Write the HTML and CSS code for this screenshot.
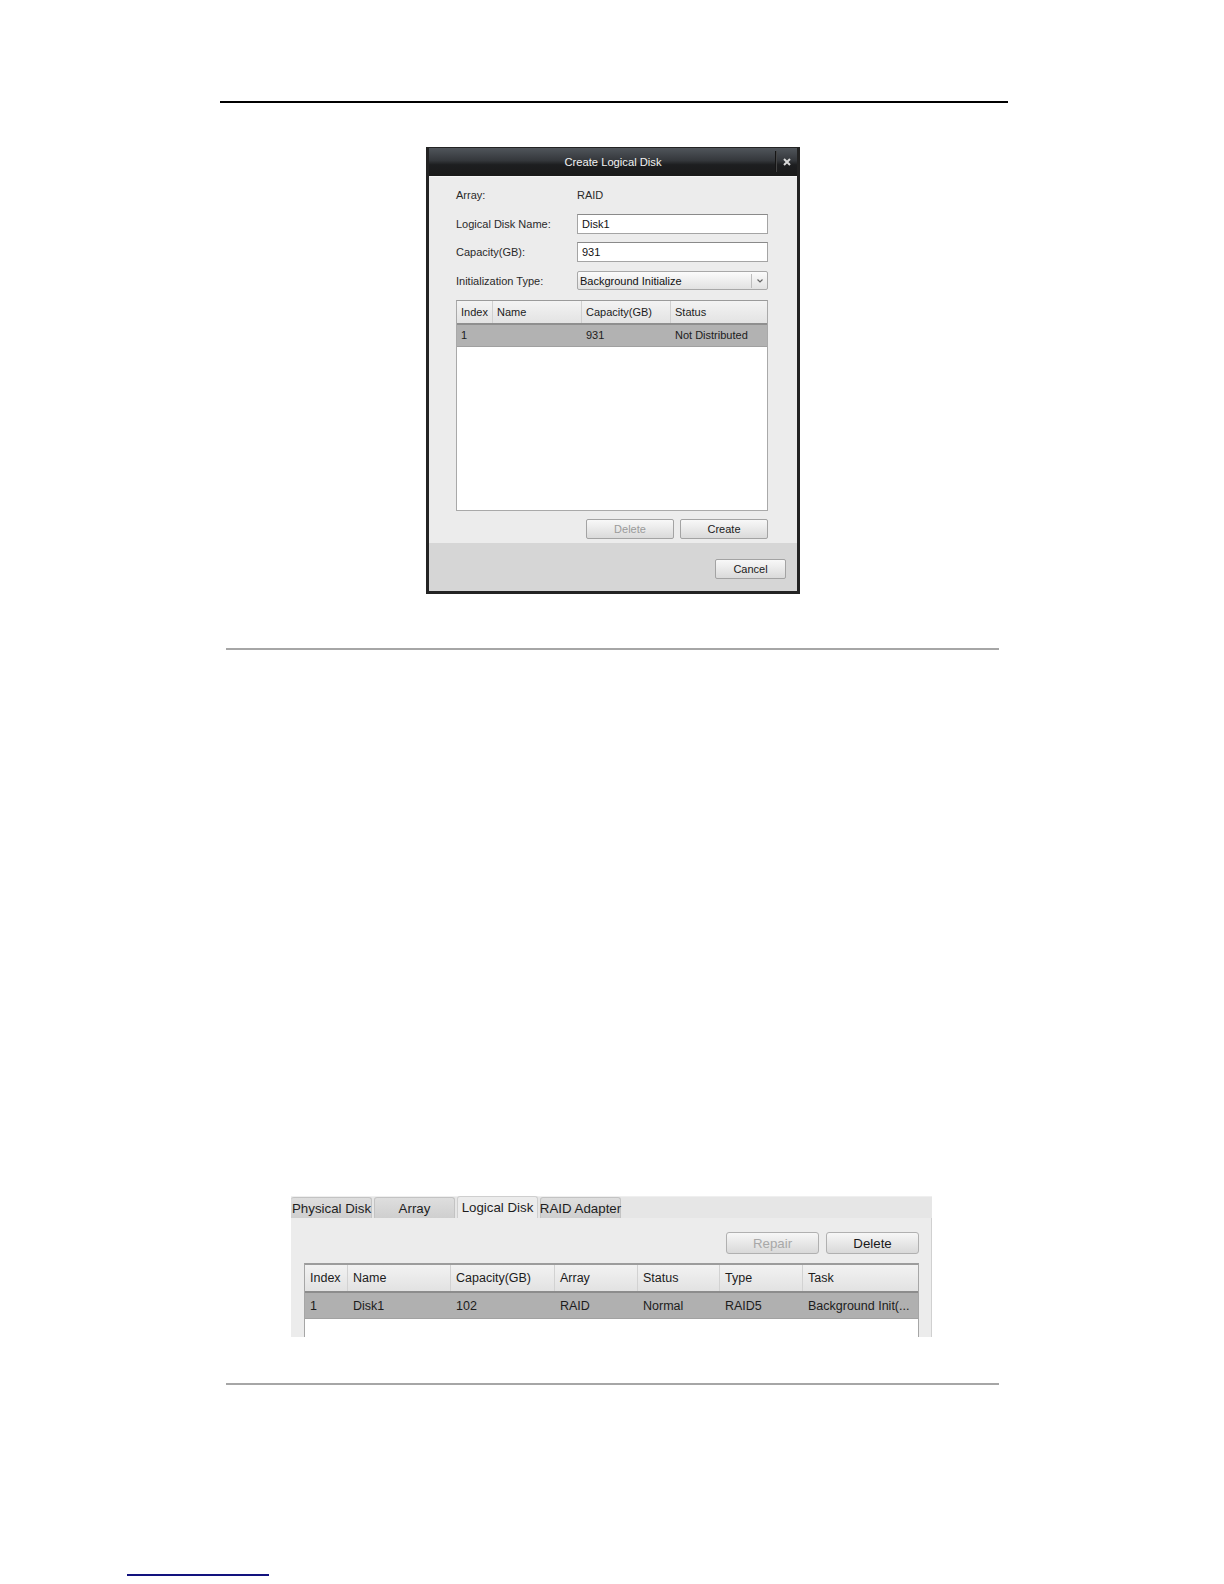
FILE: index.html
```html
<!DOCTYPE html>
<html>
<head>
<meta charset="utf-8">
<title>Create Logical Disk</title>
<link rel="stylesheet" href="styles.css">
</head>
<body>
<div class="page">
  <div class="rule-top"></div>

  <div class="dialog">
    <div class="titlebar">
      <span class="title">Create Logical Disk</span>
      <span class="close"><svg width="8" height="8" viewBox="0 0 8 8"><path d="M1 1 L7 7 M7 1 L1 7" stroke="#d8d8d8" stroke-width="2" fill="none"/></svg></span>
    </div>
    <div class="dlg-body">
      <div class="form">
        <div class="lbl">Array:</div><div class="val">RAID</div>
        <div class="lbl">Logical Disk Name:</div><div class="input">Disk1</div>
        <div class="lbl">Capacity(GB):</div><div class="input">931</div>
        <div class="lbl">Initialization Type:</div>
        <div class="select"><span class="sel-text">Background Initialize</span><span class="sel-arrow"><svg width="8" height="6" viewBox="0 0 8 6"><polyline points="1.5,1.5 4,4 6.5,1.5" fill="none" stroke="#666" stroke-width="1.2"/></svg></span></div>
      </div>
      <div class="dtable">
        <div class="dthead">
          <div class="dc w1">Index</div><div class="dc w2">Name</div><div class="dc w3">Capacity(GB)</div><div class="dc w4">Status</div>
        </div>
        <div class="dtrow">
          <div class="dc w1">1</div><div class="dc w2"></div><div class="dc w3">931</div><div class="dc w4">Not Distributed</div>
        </div>
      </div>
      <div class="dbtns">
        <div class="btn dis">Delete</div>
        <div class="btn">Create</div>
      </div>
    </div>
    <div class="dlg-foot">
      <div class="btn cancel">Cancel</div>
    </div>
  </div>

  <div class="rule-gray r1"></div>

  <div class="panel">
    <div class="tabs">
      <div class="tab">Physical Disk</div>
      <div class="tab">Array</div>
      <div class="tab active">Logical Disk</div>
      <div class="tab">RAID Adapter</div>
    </div>
    <div class="pcontent">
      <div class="pbtns">
        <div class="pbtn dis">Repair</div>
        <div class="pbtn">Delete</div>
      </div>
      <div class="ptable">
        <div class="pthead">
          <div class="pc p1">Index</div><div class="pc p2">Name</div><div class="pc p3">Capacity(GB)</div><div class="pc p4">Array</div><div class="pc p5">Status</div><div class="pc p6">Type</div><div class="pc p7">Task</div>
        </div>
        <div class="ptrow">
          <div class="pc p1">1</div><div class="pc p2">Disk1</div><div class="pc p3">102</div><div class="pc p4">RAID</div><div class="pc p5">Normal</div><div class="pc p6">RAID5</div><div class="pc p7">Background Init(...</div>
        </div>
      </div>
    </div>
  </div>

  <div class="rule-gray r2"></div>

  <div class="link-line"></div>
</div>
</body>
</html>
```

FILE: styles.css
```css
html, body {
  margin: 0;
  padding: 0;
  background: #ffffff;
}
body {
  font-family: "Liberation Sans", Arial, sans-serif;
  color: #222;
}
.page {
  width: 1224px;
  height: 1584px;
  overflow: hidden;
  display: flow-root;
}
.rule-top {
  margin: 101px 0 0 220px;
  width: 788px;
  height: 2px;
  background: #000;
}

/* ---------- dialog ---------- */
.dialog {
  margin: 44px 0 0 426px;
  width: 374px;
  height: 447px;
  box-sizing: border-box;
  border: 3px solid #232323;
  border-top-width: 1px;
  background: #ececec;
  display: flex;
  flex-direction: column;
}
.titlebar {
  height: 28px;
  flex: none;
  background: linear-gradient(#50555b, #34373b 45%, #1d1e20 60%, #1a1a1a);
  display: flex;
  align-items: center;
  justify-content: center;
  position: relative;
}
.title {
  color: #f2f2f2;
  font-size: 11.2px;
}
.close {
  position: absolute;
  right: 0;
  top: 3px;
  width: 21px;
  height: 21px;
  border-left: 1px solid #151515;
  box-shadow: inset 1px 0 0 #444;
  display: flex;
  align-items: center;
  justify-content: center;
}
.dlg-body {
  height: 367px;
  flex: none;
  box-sizing: border-box;
  padding: 8px 29px 0 27px;
  background: #ececec;
  border-top: 1px solid #f6f6f6;
  font-size: 11px;
  color: #2a2a2a;
}
.form {
  display: grid;
  grid-template-columns: 121px 1fr;
  grid-auto-rows: 20px;
  row-gap: 8.5px;
  align-items: center;
}
.lbl, .val {
  line-height: 20px;
}
.input {
  height: 20px;
  box-sizing: border-box;
  background: #fff;
  border: 1px solid #a4a4a4;
  border-top-color: #8a8a8a;
  padding-left: 4px;
  line-height: 18px;
  color: #111;
}
.select {
  height: 19px;
  box-sizing: border-box;
  border: 1px solid #a8a8a8;
  border-radius: 2px;
  background: linear-gradient(#fbfbfb, #e2e2e2);
  display: flex;
  align-items: center;
  color: #111;
}
.sel-text {
  flex: 1;
  padding-left: 2px;
}
.sel-arrow {
  width: 15px;
  height: 14px;
  border-left: 1px solid #bdbdbd;
  display: flex;
  align-items: center;
  justify-content: center;
}
.dtable {
  margin-top: 9px;
  height: 211px;
  box-sizing: border-box;
  background: #fff;
  border: 1px solid #a9a9a9;
  border-top-color: #9a9a9a;
}
.dthead {
  height: 24px;
  display: flex;
  background: linear-gradient(#f3f3f3, #e3e3e3);
  border-bottom: 2px solid #8f8f8f;
  box-sizing: border-box;
}
.dtrow {
  height: 22px;
  display: flex;
  background: #b2b2b2;
  border-bottom: 1px solid #a0a0a0;
  box-sizing: border-box;
}
.dc {
  padding-left: 4px;
  box-sizing: border-box;
  display: flex;
  align-items: center;
  white-space: nowrap;
  color: #1c1c1c;
}
.dthead .dc {
  border-right: 1px solid #d0d0d0;
}
.dthead .dc.w4 { border-right: none; }
.w1 { width: 36px; }
.w2 { width: 89px; }
.w3 { width: 89px; }
.w4 { flex: 1; }

.dbtns {
  margin-top: 8px;
  display: flex;
  justify-content: flex-end;
  gap: 6px;
}
.btn {
  width: 88px;
  height: 20px;
  box-sizing: border-box;
  border: 1px solid #a3a3a3;
  border-radius: 2px;
  background: linear-gradient(#f8f8f8, #dadada);
  display: flex;
  align-items: center;
  justify-content: center;
  font-size: 11px;
  color: #1a1a1a;
}
.btn.dis {
  color: #9a9a9a;
}
.dlg-foot {
  flex: 1;
  background: #d6d6d6;
  box-sizing: border-box;
  display: flex;
  justify-content: flex-end;
  align-items: flex-start;
  padding: 16px 11px 0 0;
}
.btn.cancel {
  width: 71px;
}

/* ---------- rules ---------- */
.rule-gray {
  margin-left: 226px;
  width: 773px;
  height: 2px;
  background: #a6a6a6;
}
.r1 { margin-top: 54px; }
.r2 { margin-top: 46px; }
.link-line {
  margin: 189px 0 0 127px;
  width: 142px;
  height: 2px;
  background: #12127e;
}

/* ---------- panel ---------- */
.panel {
  margin: 546px 0 0 291px;
  width: 641px;
  height: 141px;
  display: flex;
  flex-direction: column;
  font-size: 12.5px;
  color: #222;
}
.tabs {
  height: 22px;
  flex: none;
  box-sizing: border-box;
  background: #e6e6e6;
  border-top: 1px solid #efefef;
  display: flex;
  align-items: flex-end;
  gap: 2px;
  padding-left: 0;
}
.tab {
  width: 81px;
  height: 21px;
  box-sizing: border-box;
  border: 1px solid #c3c3c3;
  border-bottom: none;
  border-radius: 3px 3px 0 0;
  background: linear-gradient(#dedede, #cfcfcf);
  display: flex;
  align-items: center;
  justify-content: center;
  white-space: nowrap;
  font-size: 13.3px;
  color: #1e1e1e;
}
.tab:first-child {
  border-left: none;
  justify-content: flex-start;
  padding-left: 1px;
}
.tab.active {
  height: 22px;
  background: #ececec;
  border-color: #cfcfcf;
}
.pcontent {
  flex: 1;
  background: #ececec;
  box-sizing: border-box;
  border-right: 1px solid #d0d0d0;
  padding: 14px 12px 0 13px;
  overflow: hidden;
}
.pbtns {
  display: flex;
  justify-content: flex-end;
  gap: 7px;
}
.pbtn {
  width: 93px;
  height: 22px;
  box-sizing: border-box;
  border: 1px solid #b0b0b0;
  border-radius: 3px;
  background: linear-gradient(#f7f7f7, #d9d9d9);
  display: flex;
  align-items: center;
  justify-content: center;
  font-size: 13.3px;
  color: #1a1a1a;
}
.pbtn.dis {
  color: #a8a8a8;
}
.ptable {
  margin-top: 9px;
  width: 615px;
  height: 120px;
  box-sizing: border-box;
  background: #fff;
  border: 1px solid #a6a6a6;
  border-top: 2px solid #9c9c9c;
}
.pthead {
  height: 28px;
  display: flex;
  box-sizing: border-box;
  background: linear-gradient(#f2f2f2, #e2e2e2);
  border-bottom: 2px solid #8c8c8c;
}
.ptrow {
  height: 26px;
  display: flex;
  box-sizing: border-box;
  background: #b0b0b0;
  border-bottom: 1px solid #a2a2a2;
}
.pc {
  box-sizing: border-box;
  padding-left: 5px;
  display: flex;
  align-items: center;
  white-space: nowrap;
  overflow: hidden;
  color: #1c1c1c;
}
.pthead .pc {
  border-right: 1px solid #d2d2d2;
}
.pthead .pc.p7 { border-right: none; }
.p1 { width: 43px; }
.p2 { width: 103px; }
.p3 { width: 104px; }
.p4 { width: 83px; }
.p5 { width: 82px; }
.p6 { width: 83px; }
.p7 { width: 113px; }
```
